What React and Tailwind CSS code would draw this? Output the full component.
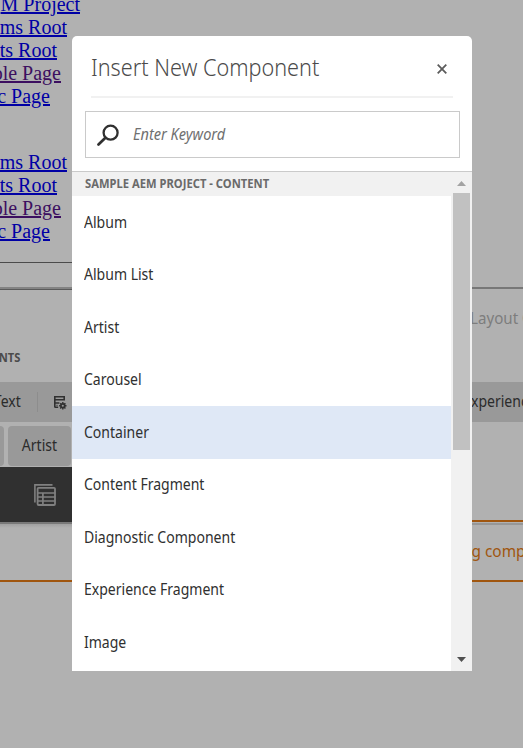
import React from "react";

const items = [
  "Album",
  "Album List",
  "Artist",
  "Carousel",
  "Container",
  "Content Fragment",
  "Diagnostic Component",
  "Experience Fragment",
  "Image",
];

function Link({ children, width, visited }) {
  return (
    <div
      className={`${width} flex h-[23px] justify-end whitespace-nowrap text-[20px] leading-[23px] underline ${
        visited ? "text-[#3c0f60]" : "text-[#0000a5]"
      }`}
    >
      <span>{children}</span>
    </div>
  );
}

function LinkGroup() {
  return (
    <>
      <Link width="w-[67px]">ms Root</Link>
      <Link width="w-[57px]">ts Root</Link>
      <Link width="w-[61px]" visited>ple Page</Link>
      <Link width="w-[50px]">c Page</Link>
    </>
  );
}

function FormIcon() {
  return (
    <svg width="14" height="15" viewBox="0 0 14 15" fill="none" stroke="#303030" className="ml-[15px] shrink-0">
      <path d="M1.8 1.8h9.4v3H1.8zM1.8 4v8.6M1.8 8h4.6M1.8 12.2h3.4" strokeWidth="1.6" />
      <path d="M3 10.3h2" strokeWidth="1" opacity=".6" />
      <circle cx="9.8" cy="10.8" r="1.9" strokeWidth="1.7" />
      <path d="M9.8 7.1v1.6M9.8 12.9v1.6M6.1 10.8h1.6M11.9 10.8h1.6M7.2 8.2l1.1 1.1M12.4 8.2l-1.1 1.1M7.2 13.4l1.1-1.1M12.4 13.4l-1.1-1.1" strokeWidth="1.4" />
    </svg>
  );
}

function TableIcon() {
  return (
    <svg width="22" height="22" viewBox="0 0 22 22" fill="none" stroke="#808080" className="ml-[34px]">
      <path d="M.9 18.5V.9H18.5" strokeWidth="1.6" />
      <rect x="3.6" y="3.8" width="17.4" height="17.2" rx="1" strokeWidth="1.8" />
      <path d="M3.5 9h18M3.5 13h18M3.5 17h18M8.9 9v12" strokeWidth="1.7" />
    </svg>
  );
}

function PageBehind() {
  return (
    <div className="flex h-full flex-col">
      <div className="h-[262px] shrink-0 overflow-hidden font-['Liberation_Serif',serif]">
        <div className="-mt-[7px]">
          <Link width="w-[80px]">M Project</Link>
          <LinkGroup />
          <div className="h-[43px]" />
          <LinkGroup />
        </div>
      </div>
      <div className="flex min-h-0 flex-1">
        <div className="flex w-[262px] flex-col">
          <div className="h-px bg-[#4b4b4b]" />
          <div className="mt-6 h-[2px] bg-[#838383]" />
          <div className="h-px bg-[#5a5a5a]" />
          <div className="mt-[57px] flex h-[22px] w-[20px] justify-end text-[12px] leading-[22px] font-bold text-[#4b4b4b]">
            <span className="origin-right scale-x-[0.93]">NTS</span>
          </div>
          <div className="mt-[13px] flex h-10 items-center bg-[#999]">
            <span className="flex w-[21px] justify-end text-[15.5px] text-[#2b2b2b]">
              <span className="origin-right scale-x-[0.905]">Text</span>
            </span>
            <span className="ml-4 h-5 w-px bg-[#8d8d8d]" />
            <FormIcon />
          </div>
          <div className="mt-1 mb-px flex h-10 gap-1 text-[15.5px] text-[#2b2b2b]">
            <div className="w-1 rounded-r-[4px] bg-[#999]" />
            <div className="flex w-[63px] items-center justify-center rounded-[4px] bg-[#999]">
              <span className="scale-x-[0.905]">Artist</span>
            </div>
          </div>
          <div className="flex h-[55px] items-center bg-[#303030]">
            <TableIcon />
          </div>
          <div className="h-[2px] bg-[#797979]" />
          <div className="h-[4px] bg-linear-to-b from-[#a0a0a0] to-[#b1b1b1]" />
          <div className="mt-[52px] h-[2px] bg-[#a0560f]" />
        </div>
        <div className="flex flex-1 flex-col overflow-hidden whitespace-nowrap">
          <div className="h-px" />
          <div className="mt-6 h-[2px] bg-[#777]" />
          <div className="mt-4 h-[26px] pl-[208px] text-[17px] leading-[26px] text-[#7d7d7d]">
            <span className="inline-block origin-left scale-x-[0.89]">Layout Container</span>
          </div>
          <div className="mt-[51px] flex h-10 items-center bg-[#999] pl-[209px] text-[15.5px] text-[#2b2b2b]">
            <span className="origin-left scale-x-[0.905]">xperience Fragment</span>
          </div>
          <div className="mt-[98px] h-[2px] bg-[#a0560f]" />
          <div className="mt-px h-[2px] bg-[#979797]" />
          <div className="mt-[13px] h-[26px] pl-[200px] text-[17px] leading-[26px] text-[#a0560f]">
            <span className="inline-block origin-left scale-x-[0.905]">ng component</span>
          </div>
          <div className="mt-4 h-[2px] bg-[#a0560f]" />
        </div>
      </div>
    </div>
  );
}

function Dialog() {
  return (
    <div className="absolute top-9 left-[72px] flex h-[635px] w-[400px] flex-col overflow-hidden rounded-t-[5px] bg-white">
      <div className="mx-[19px] flex h-[62px] shrink-0 items-center justify-between border-b-2 border-[#f1f1f1] pt-1">
        <h2 className="origin-left scale-x-[0.92] text-[23.5px] font-light whitespace-nowrap text-[#4b4b4b]">
          Insert New Component
        </h2>
        <svg width="10" height="10" viewBox="0 0 10 10" className="mt-px mr-[6px]" stroke="#5c5c5c" strokeWidth="1.8">
          <path d="M.7.7l8.6 8.6M9.3.7L.7 9.3" />
        </svg>
      </div>
      <div className="mx-[13px] mt-[13px] flex h-[47px] w-[375px] shrink-0 items-center border border-[#cacaca]">
        <svg width="22" height="22" viewBox="0 0 22 22" className="ml-[11px]" fill="none" stroke="#303030">
          <circle cx="13.6" cy="8.7" r="7" strokeWidth="2.3" />
          <path d="M8.4 13.8L1.5 20.5" strokeWidth="2.7" strokeLinecap="round" />
        </svg>
        <span className="ml-[14px] origin-left scale-x-[0.94] text-[15.5px] text-[#707070] italic">Enter Keyword</span>
      </div>
      <div className="mt-[13px] flex min-h-0 flex-1 border-t border-[#cacaca]">
        <div className="min-w-0 flex-1">
          <div className="h-6 bg-[#f1f1f1] pl-[12.5px] text-[12px] leading-[24px] font-bold text-[#6a6a6a]">
            <span className="inline-block origin-left scale-x-[0.935]">SAMPLE AEM PROJECT - CONTENT</span>
          </div>
          {items.map((name) => (
            <div
              key={name}
              className={`flex h-[52.5px] items-center pl-[12px] text-[15.5px] text-[#303030] ${
                name === "Container" ? "bg-[#dfe8f6]" : ""
              }`}
            >
              <span className="origin-left scale-x-[0.905] whitespace-nowrap">{name}</span>
            </div>
          ))}
        </div>
        <div className="flex w-[21px] flex-col items-center bg-[#f1f1f1]">
          <svg width="9" height="5" viewBox="0 0 9 5" className="mt-[9px] shrink-0" fill="#a3a3a3">
            <path d="M0 5L4.5 0L9 5z" />
          </svg>
          <div className="mt-[7px] h-[257px] w-[17px] shrink-0 bg-[#c1c1c1]" />
          <svg width="9" height="5" viewBox="0 0 9 5" className="mt-auto mb-[9px] shrink-0" fill="#505050">
            <path d="M0 0L4.5 5L9 0z" />
          </svg>
        </div>
      </div>
    </div>
  );
}

export default function App() {
  return (
    <div className="relative h-[748px] w-[523px] overflow-hidden bg-[#b1b1b1] font-['Noto_Sans',sans-serif]">
      <PageBehind />
      <Dialog />
    </div>
  );
}
